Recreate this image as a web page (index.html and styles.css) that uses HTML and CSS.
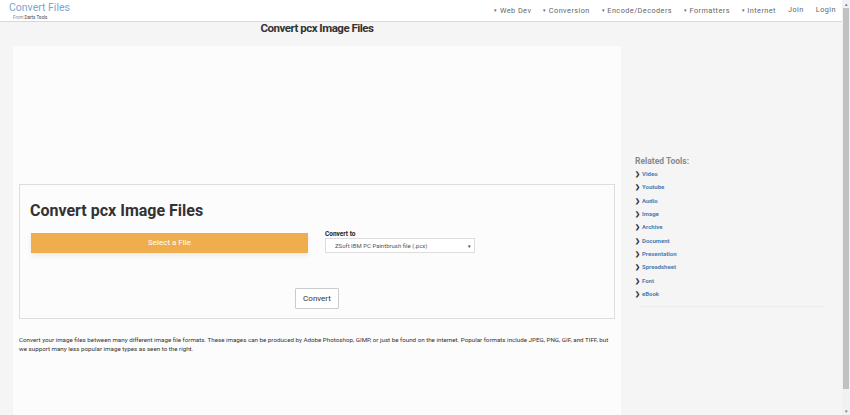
FILE: index.html
```html
<!DOCTYPE html>
<html>
<head>
<meta charset="utf-8">
<link rel="stylesheet" href="styles.css">
</head>
<body>
<header class="topbar">
  <div class="brand">
    <div class="brand-name">Convert Files</div>
    <div class="brand-sub">From <b>Darts Tools</b></div>
  </div>
  <nav class="nav">
    <span class="nav-item"><span class="caret">&#9662;</span>Web Dev</span>
    <span class="nav-item"><span class="caret">&#9662;</span>Conversion</span>
    <span class="nav-item"><span class="caret">&#9662;</span>Encode/Decoders</span>
    <span class="nav-item"><span class="caret">&#9662;</span>Formatters</span>
    <span class="nav-item"><span class="caret">&#9662;</span>Internet</span>
    <span class="nav-item">Join</span>
    <span class="nav-item">Login</span>
  </nav>
</header>
<div class="page">
  <div class="content">
    <h1 class="page-title">Convert pcx Image Files</h1>
    <div class="panel">
      <div class="ad-space"></div>
      <div class="tool-box">
        <h2 class="tool-title">Convert pcx Image Files</h2>
        <div class="tool-row">
          <div class="file-col">
            <div class="select-file">Select a File</div>
          </div>
          <div class="convert-col">
            <div class="label">Convert to</div>
            <div class="select">
              <span>ZSoft IBM PC Paintbrush file (.pcx)</span>
              <span class="arrow">&#9662;</span>
            </div>
          </div>
        </div>
        <div class="actions">
          <button class="convert-btn">Convert</button>
        </div>
      </div>
      <p class="desc">Convert your image files between many different image file formats. These images can be produced by Adobe Photoshop, GIMP, or just be found on the internet. Popular formats include JPEG, PNG, GIF, and TIFF, but we support many less popular image types as seen to the right.</p>
    </div>
  </div>
  <aside class="sidebar">
    <div class="related-title">Related Tools:</div>
    <ul class="related">
      <li><span class="chev">&#10095;</span>Video</li>
      <li><span class="chev">&#10095;</span>Youtube</li>
      <li><span class="chev">&#10095;</span>Audio</li>
      <li><span class="chev">&#10095;</span>Image</li>
      <li><span class="chev">&#10095;</span>Archive</li>
      <li><span class="chev">&#10095;</span>Document</li>
      <li><span class="chev">&#10095;</span>Presentation</li>
      <li><span class="chev">&#10095;</span>Spreadsheet</li>
      <li><span class="chev">&#10095;</span>Font</li>
      <li><span class="chev">&#10095;</span>eBook</li>
    </ul>
    <div class="side-rule"></div>
  </aside>
</div>
<div class="scrollbar">
  <span class="sb-arrow sb-up">&#9652;</span>
  <div class="sb-thumb"></div>
  <span class="sb-arrow sb-down">&#9662;</span>
</div>
</body>
</html>
```

FILE: styles.css
```css
html, body {
  margin: 0;
  padding: 0;
}
body {
  font-family: Roboto, "Liberation Sans", sans-serif;
  background: #f5f5f5;
  color: #333;
  min-height: 470px;
}
.topbar {
  height: 21px;
  background: #fff;
  border-bottom: 1px solid #cfdbe3;
  display: flex;
  justify-content: space-between;
  align-items: flex-start;
}
.brand {
  padding-left: 9px;
  padding-top: 2px;
}
.brand-name {
  font-size: 10.5px;
  line-height: 12px;
  color: #7aa6cf;
}
.brand-sub {
  font-size: 4.5px;
  line-height: 7px;
  color: #888;
  padding-left: 4px;
}
.brand-sub b {
  color: #444;
  font-weight: normal;
}
.nav {
  display: flex;
  padding-top: 5px;
  padding-right: 8px;
}
.nav-item {
  font-size: 7.3px;
  color: #666;
  letter-spacing: 0.45px;
  padding: 0 6px;
  line-height: 10px;
}
.caret {
  font-size: 5px;
  margin-right: 2px;
  vertical-align: 1px;
}
.page {
  display: flex;
  align-items: flex-start;
}
.content {
  width: 608px;
  margin-left: 13px;
}
.page-title {
  margin: 0;
  padding-top: 0;
  height: 24px;
  text-align: center;
  font-size: 11.5px;
  line-height: 12px;
  letter-spacing: -0.5px;
  font-weight: bold;
  color: #333;
}
.panel {
  background: #fcfcfc;
  padding: 0 6px 60px;
  min-height: 360px;
}
.ad-space {
  height: 138px;
}
.tool-box {
  border: 1px solid #ddd;
  padding: 17px 10px 9px;
}
.tool-title {
  margin: 0 0 13px;
  font-size: 16px;
  line-height: 18px;
  font-weight: bold;
  color: #333;
}
.tool-row {
  display: flex;
  align-items: flex-start;
  padding-left: 1px;
}
.file-col {
  width: 277px;
  padding-bottom: 7px;
}
.select-file {
  background: #f0ad4e;
  color: #fff;
  font-size: 8px;
  height: 20px;
  line-height: 20px;
  text-align: center;
  box-shadow: 0 3px 5px rgba(0,0,0,0.07);
}
.convert-col {
  margin-left: 17px;
  margin-top: -3px;
}
.label {
  font-size: 6.5px;
  font-weight: bold;
  color: #222;
  line-height: 8px;
}
.select {
  height: 13px;
  border: 1px solid #ddd;
  background: #fff;
  font-size: 6px;
  color: #555;
  display: flex;
  justify-content: space-between;
  align-items: center;
  padding: 0 0 0 9px;
  width: 139px;
}
.select .arrow {
  font-size: 5px;
  color: #333;
  padding-right: 3px;
}
.actions {
  display: flex;
  justify-content: center;
  padding-top: 28px;
}
.convert-btn {
  font-family: Roboto, "Liberation Sans", sans-serif;
  font-size: 8px;
  color: #333;
  background: #fff;
  border: 1px solid #ccc;
  border-radius: 1px;
  width: 44px;
  height: 21px;
  padding: 0;
}
.desc {
  margin: 17px 0 0;
  padding-right: 4px;
  font-size: 6.22px;
  line-height: 9px;
  color: #333;
}
.sidebar {
  margin-left: 14px;
  padding-top: 133px;
  width: 190px;
}
.related-title {
  font-size: 8.5px;
  font-weight: bold;
  color: #8a8a8a;
  line-height: 12px;
}
.related {
  list-style: none;
  margin: 0;
  padding: 0;
}
.related li {
  font-size: 6px;
  font-weight: bold;
  color: #4a7fb5;
  line-height: 13.35px;
}
.chev {
  color: #333;
  font-size: 6px;
  margin-right: 2px;
}
.side-rule {
  margin: 6px 0 0 5px;
  border-top: 1px solid #ececec;
  width: 183px;
}
.scrollbar {
  position: fixed;
  top: 0;
  right: 0;
  width: 8px;
  height: 415px;
  background: #f1f1f1;
  display: flex;
  flex-direction: column;
  align-items: center;
}
.sb-arrow {
  font-size: 5px;
  line-height: 8px;
  height: 8px;
  color: #777;
}
.sb-thumb {
  flex: 1;
  width: 6px;
  background: #c1c1c1;
  margin-bottom: 18px;
}
```
